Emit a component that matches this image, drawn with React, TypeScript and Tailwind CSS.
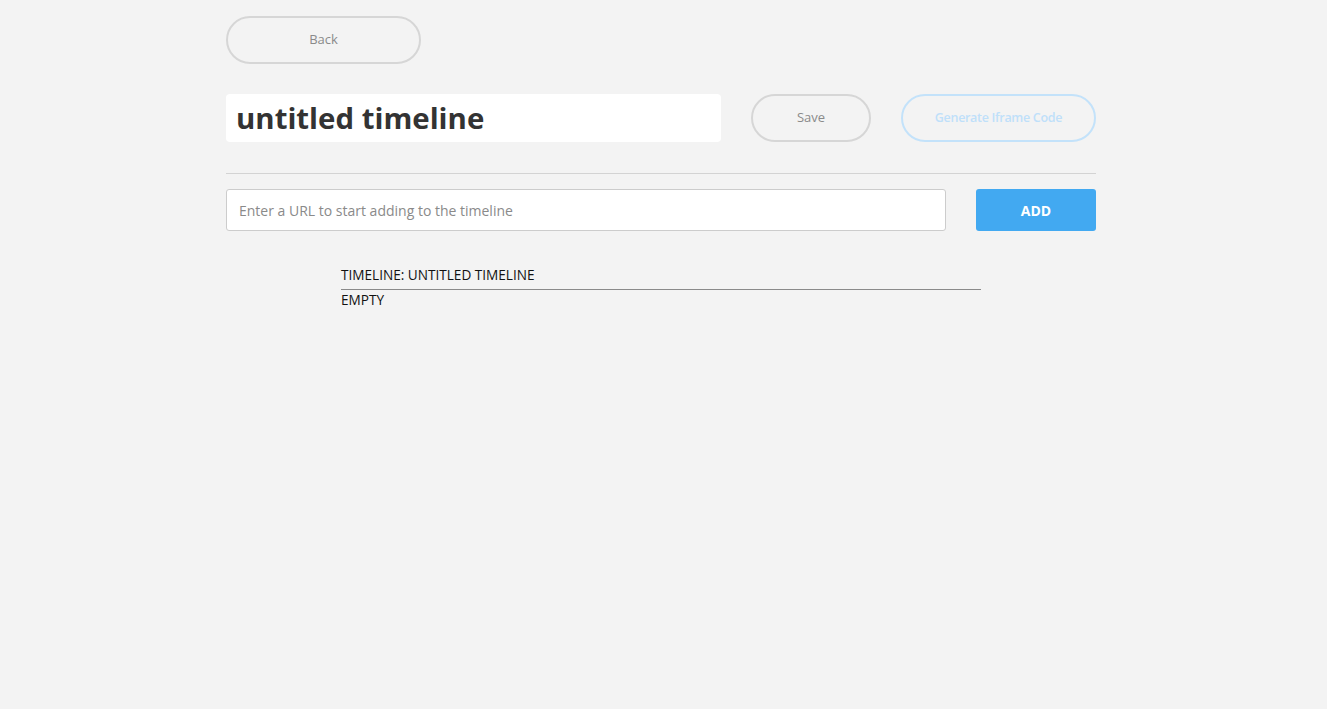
import { useState } from 'react';

export default function App() {
  const [title, setTitle] = useState('untitled timeline');
  const [url, setUrl] = useState('');

  return (
    <div
      className="min-h-[709px] w-full bg-[#f3f3f3] text-[#333]"
      style={{ fontFamily: '"Open Sans", "Liberation Sans", sans-serif' }}
    >
      <div className="ml-[226px] w-[870px] pt-4">
        <button className="h-12 w-[195px] rounded-full border-2 border-[#d6d6d6] text-[13px] text-[#8a8a8a]">
          Back
        </button>

        <div className="mt-[30px] flex items-center">
          <input
            value={title}
            onChange={(e) => setTitle(e.target.value)}
            className="h-12 w-[495px] rounded-sm bg-white px-[10px] text-[29.4px] font-bold text-[#333] focus:outline-none"
          />
          <button className="ml-[30px] h-12 w-[120px] rounded-full border-2 border-[#d6d6d6] text-[13px] text-[#8a8a8a]">
            Save
          </button>
          <button className="ml-[30px] h-12 w-[195px] rounded-full border-2 border-[#c3e2fa] text-[12.5px] font-semibold tracking-[-0.3px] text-[#bfe0fa]">
            Generate Iframe Code
          </button>
        </div>

        <div className="mt-[31px] h-px w-full bg-[#d3d3d3]" />

        <div className="mt-[15px] flex items-center">
          <input
            value={url}
            onChange={(e) => setUrl(e.target.value)}
            placeholder="Enter a URL to start adding to the timeline"
            className="h-[42px] w-[720px] rounded-[3px] border border-[#cccccc] bg-white px-3 text-[14px] text-[#333] placeholder:text-[#8a8a8a] focus:outline-none"
          />
          <button className="ml-[30px] h-[42px] w-[120px] rounded-[3px] bg-[#42a9f1] text-[14px] font-bold text-white">
            ADD
          </button>
        </div>

        <div className="mx-auto mt-[34px] w-[640px] text-[13.6px] text-[#111]">
          <div className="pb-[4px]">TIMELINE: UNTITLED TIMELINE</div>
          <div className="h-px w-full bg-[#8a8a8a]" />
          <div>EMPTY</div>
        </div>
      </div>
    </div>
  );
}
